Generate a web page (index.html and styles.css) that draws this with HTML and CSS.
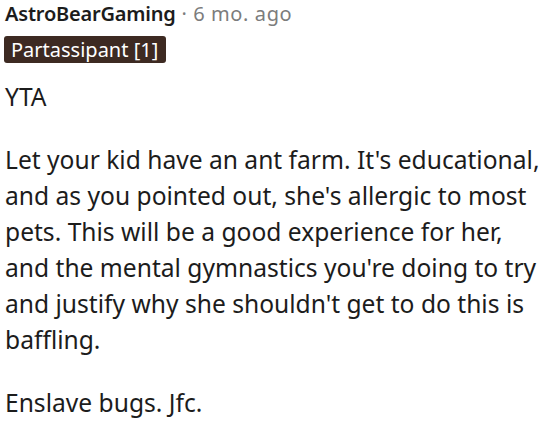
FILE: index.html
```html
<!DOCTYPE html>
<html>
<head>
<meta charset="utf-8">
<link rel="stylesheet" href="styles.css">
</head>
<body>
<div class="comment">
  <div class="meta"><span class="author">AstroBearGaming</span><span class="time"> · 6 mo. ago</span></div>
  <div class="flair-row"><span class="flair">Partassipant [1]</span></div>
  <div class="body">
    <p>YTA</p>
    <p>Let your kid have an ant farm. It's educational, and as you pointed out, she's allergic to most pets. This will be a good experience for her, and the mental gymnastics you're doing to try and justify why she shouldn't get to do this is baffling.</p>
    <p>Enslave bugs. Jfc.</p>
  </div>
</div>
</body>
</html>
```
FILE: styles.css
```css
html, body { margin: 0; padding: 0; background: #fff; }
.comment { padding: 0 0 0 5px; width: 539px; }
.meta { font-family: "Noto Sans", sans-serif; font-size: 20px; line-height: 26px; padding-top: 1px; }
.author { font-weight: 600; color: #1c1c1c; letter-spacing: -0.2px; }
.time { color: #7c7c7c; letter-spacing: 0.6px; }
.flair-row { margin-top: 9px; height: 27px; }
.flair { display: inline-block; background: #3d2a22; color: #fff; font-family: "Noto Sans", sans-serif; font-size: 20px; line-height: 27px; padding: 0 8px 0 7px; border-radius: 3px; margin-left: -1px; }
.body { font-family: "Noto Sans", sans-serif; font-size: 24.6px; line-height: 36px; color: #1c1c1c; margin-top: 16px; }
.body p { margin: 0 0 27px 0; }
.body p:last-child { margin-bottom: 0; }
```
